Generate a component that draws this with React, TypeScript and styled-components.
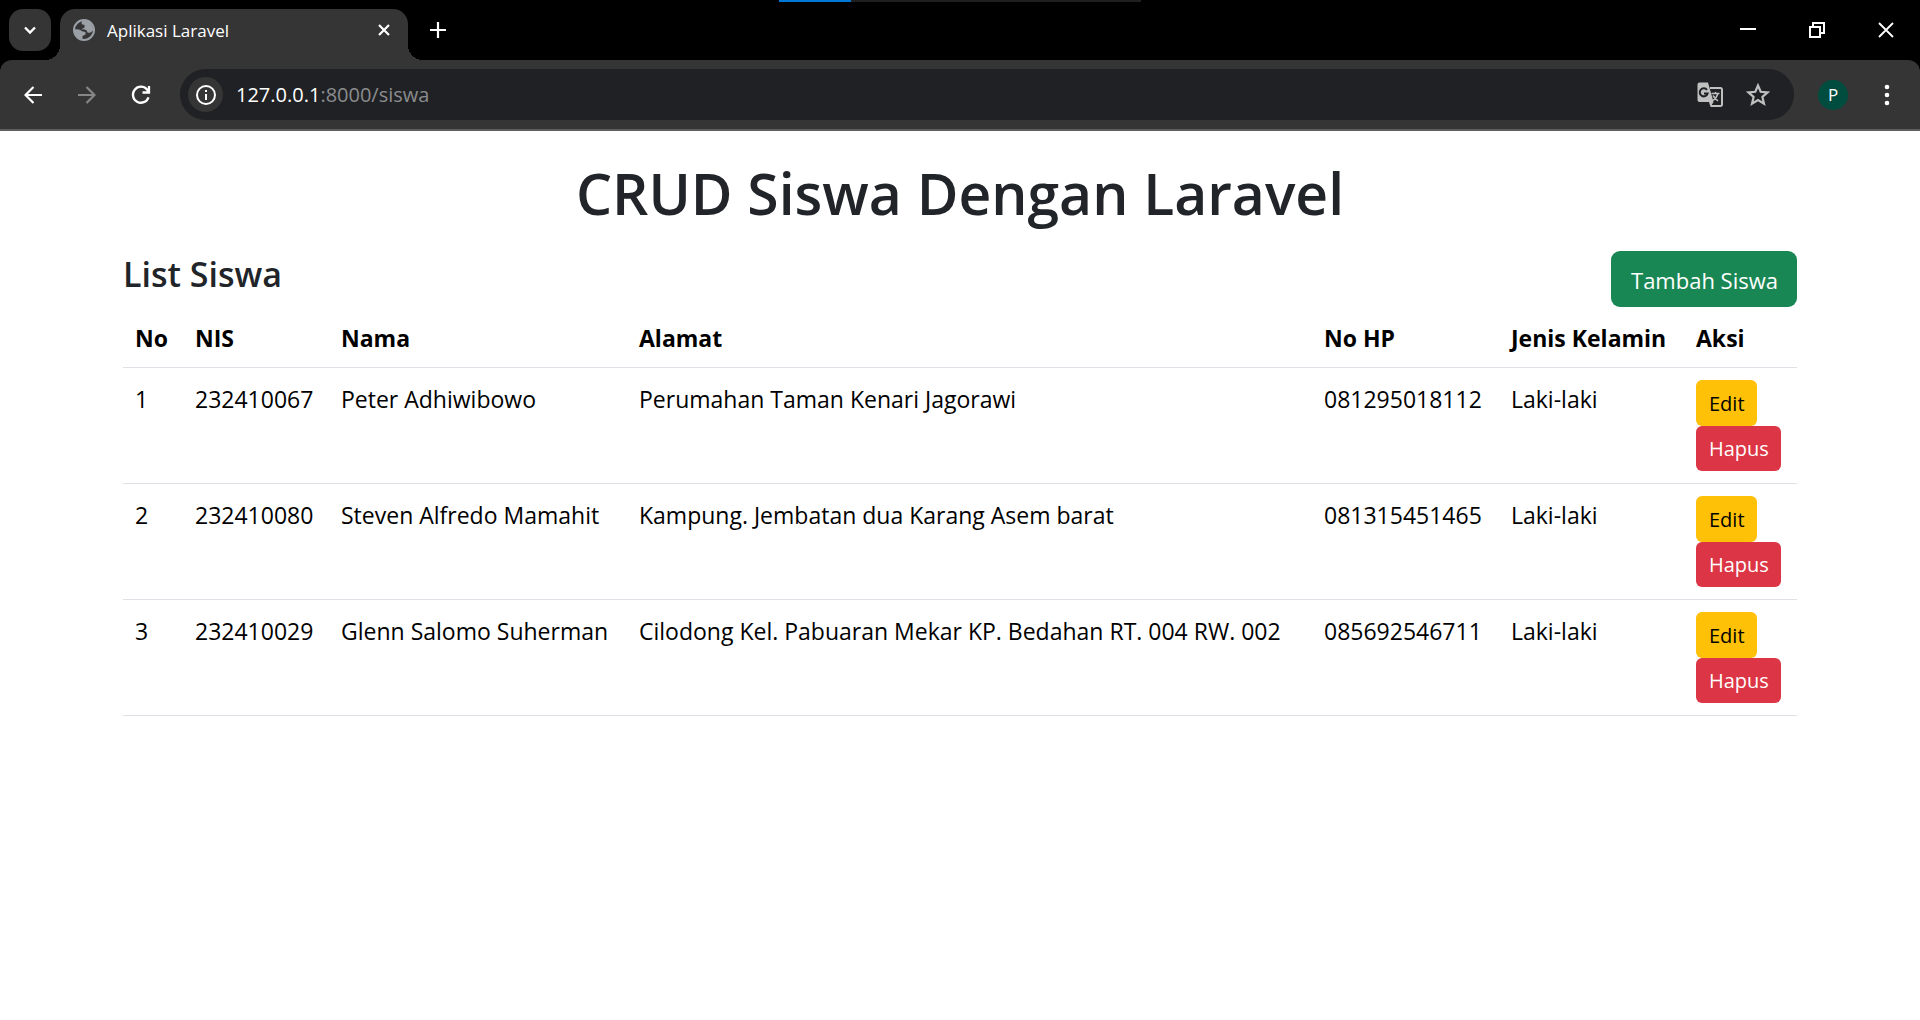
import React from "react";
import styled, { createGlobalStyle } from "styled-components";

const sans = '"Open Sans", "Noto Sans", sans-serif';

const GlobalStyle = createGlobalStyle`
  *, *::before, *::after { box-sizing: border-box; }
  body { margin: 0; background: #fff; color: #212529; font-family: ${sans}; }
  button, input { font: inherit; }
  h1, h2 { margin: 0; font-weight: 600; }
`;

const TitleBar = styled.header`
  position: relative;
  display: flex;
  align-items: stretch;
  justify-content: space-between;
  height: 60px;
  background: #000;
`;

const LoadStrip = styled.div`
  position: absolute;
  top: 0;
  left: 50%;
  width: 362px;
  height: 2px;
  transform: translateX(-50%);
  background: linear-gradient(to right, #0078d7 20%, #1f1f1f 20%);
`;

const TabStrip = styled.div`
  display: flex;
  padding: 9px 0 0 9px;
`;

const BareButton = styled.button`
  display: grid;
  place-items: center;
  padding: 0;
  border: 0;
  background: none;
  color: #fff;
`;

const TabSearch = styled(BareButton)`
  width: 42px;
  height: 42px;
  margin-right: 9px;
  border-radius: 14px;
  background: #353535;
`;

const Tab = styled.div`
  position: relative;
  display: flex;
  align-items: center;
  gap: 12px;
  width: 348px;
  padding: 0 14px 9px 13px;
  border-radius: 15px 15px 0 0;
  background: #353535;
  color: #fff;
  font-size: 17px;
  line-height: 24px;

  &::before, &::after {
    content: "";
    position: absolute;
    bottom: 0;
    width: 15px;
    height: 15px;
  }
  &::before {
    right: 100%;
    background: radial-gradient(circle at 0 0, transparent 15px, #353535 15px);
  }
  &::after {
    left: 100%;
    background: radial-gradient(circle at 100% 0, transparent 15px, #353535 15px);
  }
`;

const TabTitle = styled.span`
  flex: 1;
  padding-top: 2px;
`;

const TabClose = styled(BareButton)`
  width: 20px;
  height: 20px;
`;

const NewTab = styled(BareButton)`
  width: 42px;
  height: 42px;
  margin-left: 9px;
`;

const WindowControls = styled.div`
  display: flex;
`;

const WindowButton = styled(BareButton)`
  width: 69px;
`;

const ToolbarBack = styled.div`
  background: #000;
`;

const Toolbar = styled.nav`
  display: flex;
  align-items: center;
  height: 71px;
  padding: 9px 18px 9px 12px;
  border-bottom: 2px solid #5f5f5f;
  border-radius: 12px 12px 0 0;
  background: #353535;
`;

const NavButton = styled(BareButton)`
  width: 42px;
  height: 42px;
  margin-right: 12px;
  &:disabled { color: #868686; }
`;

const AddressBar = styled.div`
  display: flex;
  flex: 1;
  align-items: center;
  height: 51px;
  margin-left: 6px;
  padding: 0 18px 0 8px;
  border-radius: 26px;
  background: #202124;
`;

const SiteInfo = styled(BareButton)`
  width: 35px;
  height: 35px;
  border-radius: 50%;
  background: #353535;
`;

const Url = styled.div`
  flex: 1;
  padding-left: 13px;
  color: #8b8c8e;
  font-size: 20px;
  line-height: 28px;

  b { color: #fff; font-weight: 400; }
`;

const AddressButton = styled(BareButton)`
  width: 36px;
  height: 36px;
  margin-left: 12px;
  color: #c0c0c0;
`;

const Avatar = styled(BareButton)`
  width: 30px;
  height: 30px;
  margin: 0 24px;
  border-radius: 50%;
  background: #004d40;
  font-size: 17px;
  line-height: 24px;
`;

const MenuButton = styled(BareButton)`
  width: 30px;
  height: 42px;
`;

const Container = styled.main`
  padding: 26px 123px;
`;

const PageTitle = styled.h1`
  margin-bottom: 22px;
  font-size: 57px;
  line-height: 72px;
  text-align: center;
`;

const ListHeader = styled.div`
  display: flex;
  align-items: flex-start;
  justify-content: space-between;
`;

const ListTitle = styled.h2`
  font-size: 34px;
  line-height: 46px;
`;

const AddLink = styled.a`
  padding: 11px 19px 9px 20px;
  border-radius: 9px;
  background: #198754;
  color: #fff;
  font-size: 22px;
  line-height: 36px;
  text-decoration: none;
`;

const StudentTable = styled.table`
  width: 100%;
  border-collapse: collapse;
  table-layout: fixed;
  color: #000;
  font-size: 23px;
  line-height: 36px;

  th, td {
    padding: 13px 12px 11px;
    border-bottom: 1px solid #dee2e6;
    text-align: left;
    vertical-align: top;
    white-space: nowrap;
  }
  td:last-child { padding: 12px; }
`;

const Column = styled.col<{ $width?: number }>`
  width: ${({ $width }) => ($width ? `${$width}px` : "auto")};
`;

const Actions = styled.div`
  display: grid;
  grid-template-rows: 46px 45px;
  justify-items: start;
`;

const smallButton = `
  display: flex;
  align-items: center;
  padding: 1px 12px 0 13px;
  border: 0;
  border-radius: 6px;
  font-size: 20px;
  line-height: 32px;
`;

const EditLink = styled.a`
  ${smallButton}
  background: #ffc107;
  color: #000;
  text-decoration: none;
`;

const DeleteButton = styled.button`
  ${smallButton}
  background: #dc3545;
  color: #fff;
`;

const columns: { label: string; width?: number }[] = [
  { label: "No", width: 60 },
  { label: "NIS", width: 146 },
  { label: "Nama", width: 298 },
  { label: "Alamat" },
  { label: "No HP", width: 187 },
  { label: "Jenis Kelamin", width: 185 },
  { label: "Aksi", width: 113 },
];

const students = [
  { nis: "232410067", name: "Peter Adhiwibowo", address: "Perumahan Taman Kenari Jagorawi", phone: "081295018112", gender: "Laki-laki" },
  { nis: "232410080", name: "Steven Alfredo Mamahit", address: "Kampung. Jembatan dua Karang Asem barat", phone: "081315451465", gender: "Laki-laki" },
  { nis: "232410029", name: "Glenn Salomo Suherman", address: "Cilodong Kel. Pabuaran Mekar KP. Bedahan RT. 004 RW. 002", phone: "085692546711", gender: "Laki-laki" },
];

function Icon({ size, box = 24, children }: { size: number; box?: number; children: React.ReactNode }) {
  return (
    <svg width={size} height={size} viewBox={`0 0 ${box} ${box}`} fill="none" stroke="currentColor" aria-hidden="true">
      {children}
    </svg>
  );
}

function BrowserChrome() {
  return (
    <>
      <TitleBar>
        <LoadStrip />
        <TabStrip>
          <TabSearch aria-label="Search tabs">
            <Icon size={14} box={14}><path d="M2 4.5l5 5 5-5" strokeWidth="2.4" /></Icon>
          </TabSearch>
          <Tab>
            <Icon size={22} box={22}>
              <circle cx="11" cy="11" r="10" stroke="#9aa0a6" strokeWidth="2" />
              <path d="M11 1C8.600 2 8.300 3.500 8.800 5.200L11.500 6v2.500L8 10.500c3.500-.5 6 .2 6.200 2.500 1 1.500 3.500 1 5.800-1.500A9.500 9.500 0 0 0 11 1z" fill="#9aa0a6" stroke="none" />
              <path d="M1.500 10.500c3-.8 6 0 7.500 1.800l3.500.7v2.500L9.500 17v3.500A10 10 0 0 1 1.500 10.500z" fill="#9aa0a6" stroke="none" />
            </Icon>
            <TabTitle>Aplikasi Laravel</TabTitle>
            <TabClose aria-label="Close tab">
              <Icon size={14} box={14}><path d="M2 2l10 10M12 2L2 12" strokeWidth="2.200" /></Icon>
            </TabClose>
          </Tab>
          <NewTab aria-label="New tab">
            <Icon size={16} box={16}><path d="M8 0v16M0 8h16" strokeWidth="2.200" /></Icon>
          </NewTab>
        </TabStrip>
        <WindowControls>
          <WindowButton aria-label="Minimize">
            <Icon size={16} box={16}><path d="M0 7h16" strokeWidth="2" /></Icon>
          </WindowButton>
          <WindowButton aria-label="Restore">
            <Icon size={16} box={16}><path d="M1 5h10v10H1zM4 5V1h11v10h-4" strokeWidth="2" /></Icon>
          </WindowButton>
          <WindowButton aria-label="Close window">
            <Icon size={16} box={16}><path d="M1 1l14 14M15 1L1 15" strokeWidth="1.800" /></Icon>
          </WindowButton>
        </WindowControls>
      </TitleBar>
      <ToolbarBack>
        <Toolbar>
          <NavButton aria-label="Back">
            <Icon size={18} box={18}><path d="M18 9H2M9.500 1L1.500 9l8 8" strokeWidth="2.200" /></Icon>
          </NavButton>
          <NavButton aria-label="Forward" disabled>
            <Icon size={18} box={18}><path d="M0 9h16M8.500 1l8 8-8 8" strokeWidth="2.200" /></Icon>
          </NavButton>
          <NavButton aria-label="Reload">
            <Icon size={20} box={20}><path d="M17.500 12.300A8 8 0 1 1 16 4.500l1.500 2M18 1v6.500h-6.500" strokeWidth="2.300" /></Icon>
          </NavButton>
          <AddressBar>
            <SiteInfo aria-label="Site information">
              <Icon size={20} box={20}>
                <circle cx="10" cy="10" r="9" strokeWidth="2" />
                <path d="M10 9v6M10 5v2" strokeWidth="2" />
              </Icon>
            </SiteInfo>
            <Url><b>127.0.0.1</b>:8000/siswa</Url>
            <AddressButton aria-label="Translate this page">
              <Icon size={26} box={26}>
                <path d="M13 6h10.500a1.500 1.500 0 0 1 1.500 1.500v15a1.500 1.500 0 0 1-1.500 1.500H14" strokeWidth="2" />
                <path d="M2.500.5H11l5.500 19.500H2.500a2 2 0 0 1-2-2V2.500a2 2 0 0 1 2-2zM12 20h4.500l-3 5z" fill="currentColor" stroke="none" />
                <path d="M10 8a4 4 0 1 0 .6 3.500H7" stroke="#202124" strokeWidth="2" />
                <path d="M14.500 11.500h8M18.500 10v1.500M21 11.500c-.8 3-2.500 5-5 7M16 13.500c1.500 2.500 3 4 5 5.500" strokeWidth="1.500" />
              </Icon>
            </AddressButton>
            <AddressButton aria-label="Bookmark this page">
              <Icon size={24}><path d="M12 2.500l2.700 6.300 6.900.6-5.200 4.500 1.600 6.800L12 17.100l-6 3.600 1.600-6.800-5.200-4.500 6.900-.6z" strokeWidth="2.200" /></Icon>
            </AddressButton>
          </AddressBar>
          <Avatar aria-label="Profile">P</Avatar>
          <MenuButton aria-label="Browser menu">
            <Icon size={22} box={22}>
              <g fill="currentColor" stroke="none">
                <circle cx="11" cy="3" r="2.300" /><circle cx="11" cy="11" r="2.300" /><circle cx="11" cy="19" r="2.300" />
              </g>
            </Icon>
          </MenuButton>
        </Toolbar>
      </ToolbarBack>
    </>
  );
}

export default function App() {
  return (
    <>
      <GlobalStyle />
      <BrowserChrome />
      <Container>
        <PageTitle>CRUD Siswa Dengan Laravel</PageTitle>
        <ListHeader>
          <ListTitle>List Siswa</ListTitle>
          <AddLink href="#tambah">Tambah Siswa</AddLink>
        </ListHeader>
        <StudentTable>
          <colgroup>
            {columns.map((c) => <Column key={c.label} $width={c.width} />)}
          </colgroup>
          <thead>
            <tr>{columns.map((c) => <th key={c.label} scope="col">{c.label}</th>)}</tr>
          </thead>
          <tbody>
            {students.map((s, i) => (
              <tr key={s.nis}>
                <td>{i + 1}</td>
                <td>{s.nis}</td>
                <td>{s.name}</td>
                <td>{s.address}</td>
                <td>{s.phone}</td>
                <td>{s.gender}</td>
                <td>
                  <Actions>
                    <EditLink href={`#edit-${s.nis}`}>Edit</EditLink>
                    <DeleteButton type="button">Hapus</DeleteButton>
                  </Actions>
                </td>
              </tr>
            ))}
          </tbody>
        </StudentTable>
      </Container>
    </>
  );
}
